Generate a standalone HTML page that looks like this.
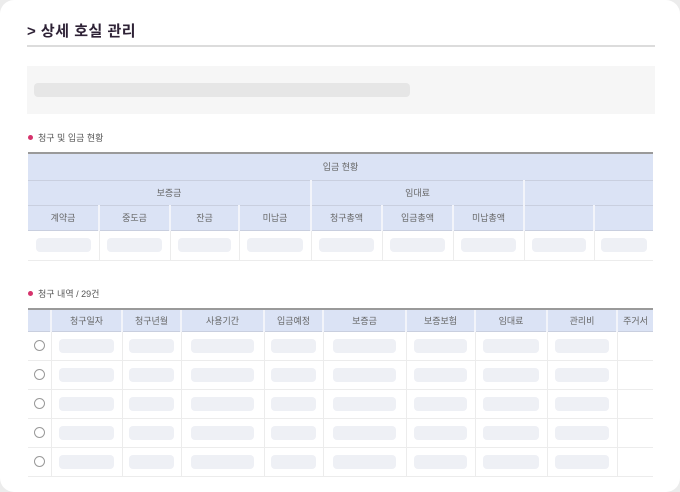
<!DOCTYPE html>
<html><head><meta charset="utf-8"><style>
*{margin:0;padding:0;box-sizing:border-box}
body{width:680px;height:492px;background:#ececec;font-family:"Liberation Sans","Noto Sans CJK KR",sans-serif;overflow:hidden;position:relative}
.card{position:absolute;left:0;top:0;width:680px;height:492px;background:#fff;border-radius:14px}
.abs{position:absolute}
.title{left:27px;top:20px;font-size:15px;font-weight:bold;color:#2e2236;letter-spacing:0.5px}
.hr{left:27px;top:45px;width:628px;height:2px;background:#dcdcdc}
.box{left:27px;top:66px;width:628px;height:48px;background:#f6f6f6}
.bar{left:34px;top:83px;width:376px;height:14px;background:#e6e6e6;border-radius:4px}
.sec{font-size:9px;color:#555}
.dot{display:inline-block;width:5px;height:5px;border-radius:50%;background:#d6336c;margin-right:5px;vertical-align:1px}
table{position:absolute;border-collapse:collapse;table-layout:fixed;font-size:9px;color:#666}
td{border:1px solid #ececec;text-align:center;overflow:hidden;white-space:nowrap}
td:first-child{border-left:none}
td:last-child{border-right:none}
.h td{background:#dbe3f5;border-color:#fff #f2f4fa #c9cfdf #f2f4fa;border-width:0 2px 1px 0}
.p{display:inline-block;height:14px;background:#eef0f5;border-radius:4px;width:78%;vertical-align:middle}
.r{display:inline-block;width:11px;height:11px;border:1.5px solid #999;border-radius:50%;vertical-align:middle}
</style></head><body><div class="card">
<div class="abs title">&gt; 상세 호실 관리</div>
<div class="abs hr"></div>
<div class="abs box"></div><div class="abs bar"></div>
<div class="abs sec" style="left:28px;top:131px"><span class="dot"></span>청구 및 입금 현황</div>
<div class="abs" style="left:28px;top:152px;width:625px;height:2px;background:#9a9a9a"></div>
<table style="left:28px;top:154px;width:625px">
<colgroup><col style="width:71px"><col style="width:71px"><col style="width:69px"><col style="width:72px"><col style="width:71px"><col style="width:71px"><col style="width:71px"><col style="width:70px"><col style="width:59px"></colgroup>
<tr class="h" style="height:26px"><td colspan="9">입금 현황</td></tr>
<tr class="h" style="height:25px"><td colspan="4">보증금</td><td colspan="3">임대료</td><td colspan="2"></td></tr>
<tr class="h" style="height:25px"><td>계약금</td><td>중도금</td><td>잔금</td><td>미납금</td><td>청구총액</td><td>입금총액</td><td>미납총액</td><td></td><td></td></tr>
<tr style="height:30px"><td><span class="p"></span></td><td><span class="p"></span></td><td><span class="p"></span></td><td><span class="p"></span></td><td><span class="p"></span></td><td><span class="p"></span></td><td><span class="p"></span></td><td><span class="p"></span></td><td><span class="p"></span></td></tr>
</table>
<div class="abs sec" style="left:28px;top:287px"><span class="dot"></span>청구 내역 / 29건</div>
<div class="abs" style="left:28px;top:308px;width:625px;height:2px;background:#9a9a9a"></div>
<table style="left:28px;top:310px;width:625px">
<colgroup><col style="width:23px"><col style="width:71px"><col style="width:59px"><col style="width:83px"><col style="width:59px"><col style="width:83px"><col style="width:69px"><col style="width:72px"><col style="width:70px"><col style="width:36px"></colgroup>
<tr class="h" style="height:21px"><td></td><td>청구일자</td><td>청구년월</td><td>사용기간</td><td>입금예정</td><td>보증금</td><td>보증보험</td><td>임대료</td><td>관리비</td><td>주거서</td></tr>
<tr style="height:29px"><td><span class="r"></span></td><td><span class="p"></span></td><td><span class="p"></span></td><td><span class="p"></span></td><td><span class="p"></span></td><td><span class="p"></span></td><td><span class="p"></span></td><td><span class="p"></span></td><td><span class="p"></span></td><td></td></tr>
<tr style="height:29px"><td><span class="r"></span></td><td><span class="p"></span></td><td><span class="p"></span></td><td><span class="p"></span></td><td><span class="p"></span></td><td><span class="p"></span></td><td><span class="p"></span></td><td><span class="p"></span></td><td><span class="p"></span></td><td></td></tr>
<tr style="height:29px"><td><span class="r"></span></td><td><span class="p"></span></td><td><span class="p"></span></td><td><span class="p"></span></td><td><span class="p"></span></td><td><span class="p"></span></td><td><span class="p"></span></td><td><span class="p"></span></td><td><span class="p"></span></td><td></td></tr>
<tr style="height:29px"><td><span class="r"></span></td><td><span class="p"></span></td><td><span class="p"></span></td><td><span class="p"></span></td><td><span class="p"></span></td><td><span class="p"></span></td><td><span class="p"></span></td><td><span class="p"></span></td><td><span class="p"></span></td><td></td></tr>
<tr style="height:29px"><td><span class="r"></span></td><td><span class="p"></span></td><td><span class="p"></span></td><td><span class="p"></span></td><td><span class="p"></span></td><td><span class="p"></span></td><td><span class="p"></span></td><td><span class="p"></span></td><td><span class="p"></span></td><td></td></tr>
</table>
</div></body></html>
